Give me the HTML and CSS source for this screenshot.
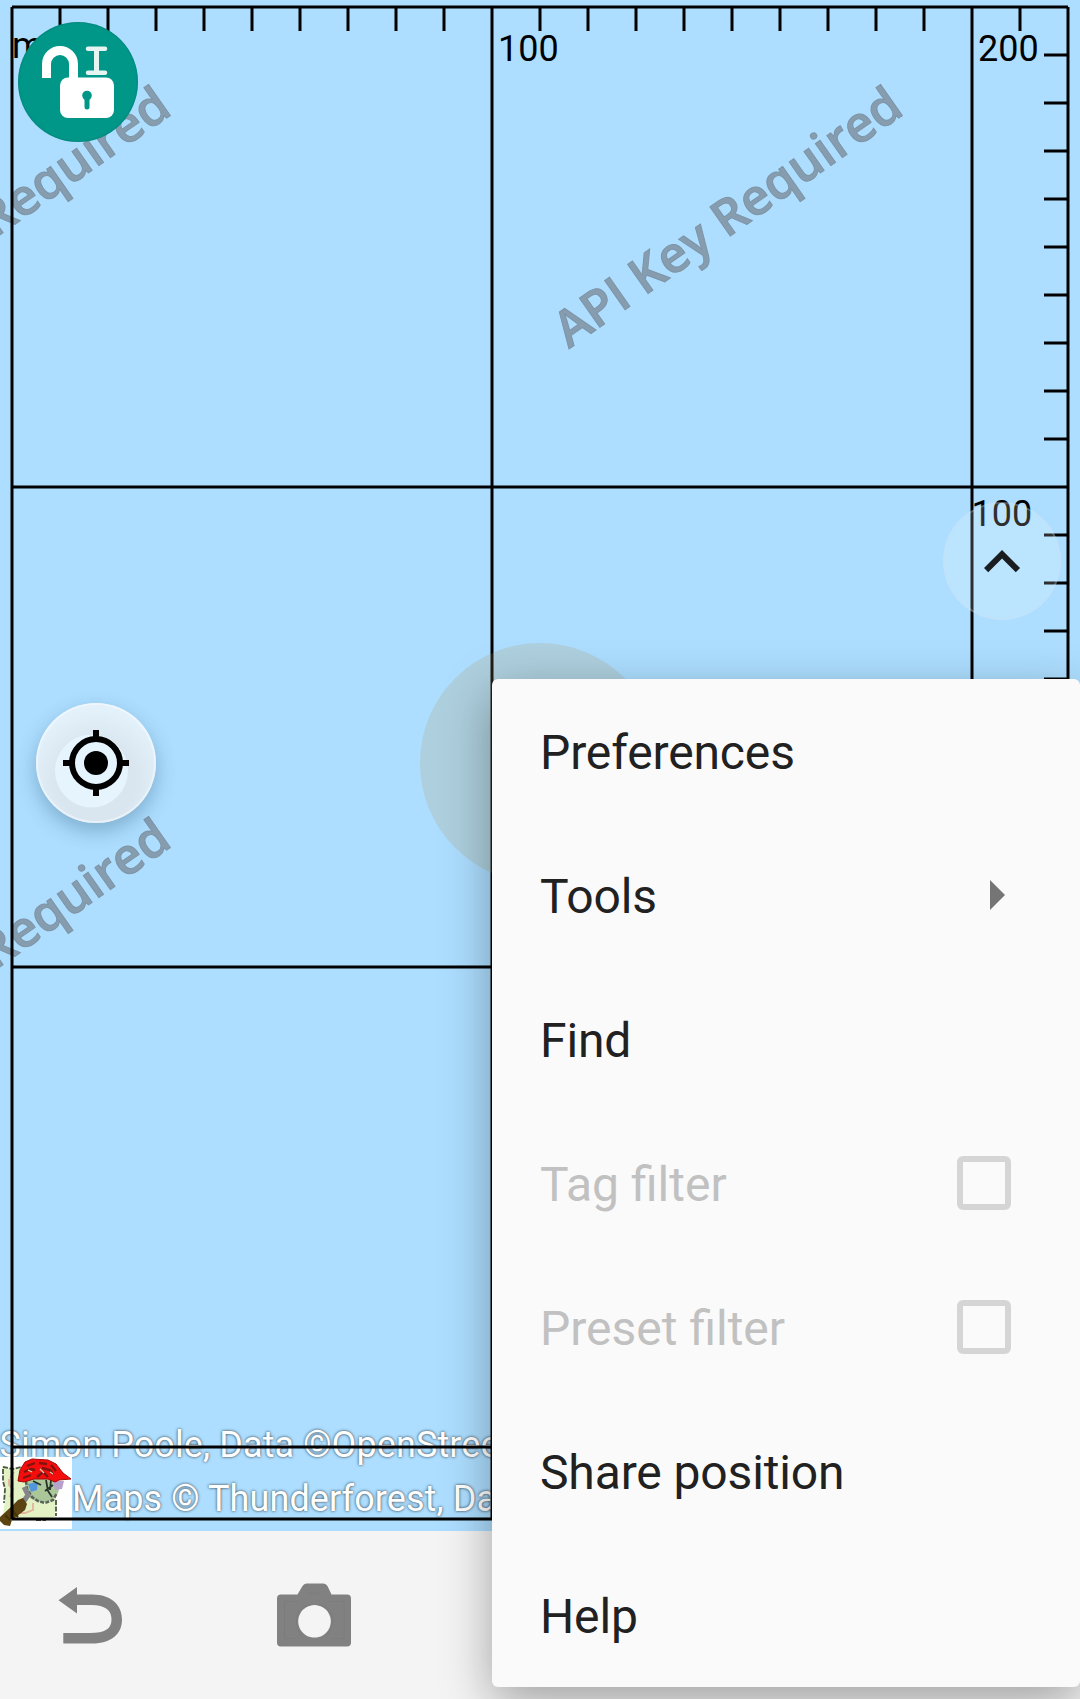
FILE: index.html
```html
<!DOCTYPE html>
<html lang="en">
<head>
<meta charset="utf-8">
<title>Map</title>
<link rel="stylesheet" href="styles.css">
</head>
<body>
<div class="app">
  <main class="map">
    <svg class="map-canvas" viewBox="0 0 1080 1531" width="1080" height="1531">
      <defs>
        <g id="logo">
          <rect width="72" height="72" fill="#fff"/>
          <path d="M2 9l5 2 7 1 6-2h30l5 12 1 20-1 18-13 2-10 1-12-2-10 1-7-4 2-14-1-16z" fill="#e2f2c4"/>
          <path d="M3 10l10 2 8-2M3 12v12l2 8-1 14M56 43v16M36 63h10" fill="none" stroke="#4b5842" stroke-width="1.8" stroke-dasharray="5 1.5"/>
          <path d="M9 22v6l4 4-3 8M33 46v7l-8 3h-5M14 15l-4 6" fill="none" stroke="#e5b39a" stroke-width="1.8"/>
          <ellipse cx="42" cy="31" rx="17" ry="14" fill="#abc79a"/>
          <path d="M53 24h11l-2 8-7 1z" fill="#b6a2cc"/>
          <path d="M28 27l10-2-1 8-6 2z" fill="#5296dc"/>
          <path d="M26 24l1 8 5 8 6 4 7 2 8-3 4-7" fill="none" stroke="#59635a" stroke-width="2.5" stroke-dasharray="4 1.4"/>
          <path d="M46 23l2 11 4 6M51 23l-1 10M33 24l8 4M45 34l8-6" fill="none" stroke="#26352a" stroke-width="1.8"/>
          <path d="M24 30l4 8-4 6" fill="none" stroke="#858489" stroke-width="5"/>
          <path d="M0 60l12-11 6-6 5-2 4 6-2 6-13 10-2 6-6-1-4-4z" fill="#5c4312"/>
          <path d="M11 52l7 8M5 58l5 5" stroke="#463207" stroke-width="2"/>
          <path d="M18 24l2-11 5-8 7-3 16 1 8 4 7 9 8 6-12 1-4 2-7-3H34l-10 3z" fill="#f50d0d" stroke="#a20909" stroke-width="1"/>
          <path d="M27 9l8-3M39 6l8 1M24 15l7-3 4 1M42 11l8 2 3 4M23 21l8-3M37 20l6-5 5 5M51 8l5 6" fill="none" stroke="#7d150e" stroke-width="2.4"/>
          <path d="M28 13l4 2M40 12l4 4M50 15l3 2" stroke="#dccdb1" stroke-width="1.3"/>
        </g>
      </defs>
      <g class="watermark">
        <text transform="translate(569 349) rotate(-35)" textLength="411">API Key Required</text>
        <text transform="translate(-163 349) rotate(-35)" textLength="411">API Key Required</text>
        <text transform="translate(-163 1081) rotate(-35)" textLength="411">API Key Required</text>
      </g>
      <g class="attribution">
        <text x="-0.5" y="1457">Simon Poole, Data ©OpenStreetMap</text>
        <text x="72" y="1511">Maps © Thunderforest, Data</text>
      </g>
      <use href="#logo" x="0" y="1457"/>
      <path class="grid" d="M12 7V1519M492 7V1519M972 7V1519M1068 7V1519M12 7H1068M12 487H1068M12 967H1068M12 1447H1068M12 1519H1068
        M60 7V31M108 7V31M156 7V31M204 7V31M252 7V31M300 7V31M348 7V31M396 7V31M444 7V31M540 7V31M588 7V31M636 7V31M684 7V31M732 7V31M780 7V31M828 7V31M876 7V31M924 7V31M1020 7V31
        M1044 55H1068M1044 103H1068M1044 151H1068M1044 199H1068M1044 247H1068M1044 295H1068M1044 343H1068M1044 391H1068M1044 439H1068M1044 535H1068M1044 583H1068M1044 631H1068M1044 679H1068"/>
      <g class="scale">
        <text x="12" y="58">m</text>
        <text x="498" y="61">100</text>
        <text x="978" y="61">200</text>
        <text x="971.500" y="526">100</text>
      </g>
      <circle class="position" cx="540" cy="763" r="120"/>
    </svg>

    <button class="fab fab-lock" aria-label="Unlock editing">
      <svg viewBox="18 22 120 120" width="120" height="120">
        <path d="M46.5 78V64a13.5 13.5 0 0 1 27 0V82" fill="none" stroke="#fff" stroke-width="9"/>
        <rect x="60" y="77.5" width="54" height="40.500" rx="8" fill="#fff"/>
        <path d="M88 48.800h17M88 72.800h17" stroke="#e6f4f2" stroke-width="4.500" stroke-linecap="round"/>
        <path d="M96.500 49v24" stroke="#e6f4f2" stroke-width="5"/>
        <circle cx="87" cy="95.500" r="4.800" fill="#009688"/>
        <path d="M87 96v11" stroke="#009688" stroke-width="5" stroke-linecap="round"/>
      </svg>
    </button>

    <button class="fab fab-locate" aria-label="Go to current position">
      <svg viewBox="36 703 120 120" width="120" height="120">
        <circle cx="91.500" cy="771" r="36.500" fill="#e6f4fe"/>
        <circle cx="96" cy="763" r="21" fill="#e6f4fe"/>
        <circle cx="96" cy="763" r="24" fill="none" stroke="#000" stroke-width="6"/>
        <circle cx="96" cy="763" r="12"/>
        <path d="M96 730v8M96 788v8M63 763h8M121 763h8" stroke="#000" stroke-width="6"/>
      </svg>
    </button>

    <button class="fab fab-up" aria-label="Show more">
      <svg viewBox="-7.670 -8 39.330 39.330" width="118" height="118">
        <path d="M7.410 15.410L12 10.830l4.590 4.580L18 14l-6-6-6 6z" fill="#1a1d1f"/>
      </svg>
    </button>
  </main>

  <footer class="toolbar">
    <button class="tool" aria-label="Undo">
      <svg viewBox="54 1578 72 72" width="72" height="72" fill="#818181">
        <path d="M58.500 1600.300L77 1587v7.500h15c20 0 30 11 30 25s-10 24-30 24H63.300V1633H90c15 0 21.500-4 21.500-13.500 0-10-6.500-14-20-14.500H77v8.500z"/>
      </svg>
    </button>
    <button class="tool" aria-label="Camera">
      <svg viewBox="278 1577.500 72 72" width="72" height="72" fill="#818181">
        <path fill-rule="evenodd" d="M281 1594h16.500l5-8.500q1.500-2.500 4-2.500h17q2.500 0 4 2.500l4 8.500H347q4 0 4 4v44q0 4-4 4H281q-4 0-4-4v-44q0-4 4-4zM314.500 1604.500a16.300 16.300 0 1 0 .01 0z"/>
        <path d="M306 1592.500h15M297.500 1601h-13v37h11M311 1604.500q-10 1-14 10-3 10 5 21M318 1604.500q10 1 14 10 3 10-5 21M329 1601h15v37h-12" fill="none" stroke="#7c7c7c"/>
      </svg>
    </button>
  </footer>

  <nav class="menu">
    <div class="item"><span class="label">Preferences</span></div>
    <div class="item"><span class="label">Tools</span><span class="submenu-arrow"></span></div>
    <div class="item"><span class="label">Find</span></div>
    <div class="item disabled"><span class="label">Tag filter</span><span class="checkbox"></span></div>
    <div class="item disabled"><span class="label">Preset filter</span><span class="checkbox"></span></div>
    <div class="item"><span class="label">Share position</span></div>
    <div class="item"><span class="label">Help</span></div>
  </nav>
</div>
</body>
</html>
```

FILE: styles.css
```css
* {
  box-sizing: border-box;
}

body {
  margin: 0;
  font-family: Roboto, "Liberation Sans", sans-serif;
}

button {
  margin: 0;
  padding: 0;
  border: 0;
  background: none;
}

.app {
  position: relative;
  display: flex;
  flex-direction: column;
  width: 1080px;
  height: 1699px;
  overflow: hidden;
}

.map {
  position: relative;
  height: 1531px;
  background: #addeff;
}

.map-canvas {
  display: block;
}

.watermark {
  fill: #869db0;
  font: 600 50px "Open Sans", "Noto Sans", sans-serif;
  stroke: #7e94a6;
  stroke-width: 1;
}

.attribution {
  fill: #fff;
  font-size: 36px;
  letter-spacing: 0.1px;
  text-shadow: 0 0 3px rgba(0, 0, 0, 0.8);
}

.grid {
  fill: none;
  stroke: #000;
  stroke-width: 3;
}

.scale {
  font-size: 36px;
}

.position {
  fill: rgba(178, 150, 90, 0.2);
}

/* Round buttons floating over the map */
.fab {
  position: absolute;
  width: 120px;
  height: 120px;
  border-radius: 50%;
}

.fab svg {
  display: block;
}

.fab-lock {
  left: 18px;
  top: 22px;
  background: #009688;
  box-shadow: inset 0 0 2px rgba(0, 60, 50, 0.4);
}

.fab-locate {
  left: 36px;
  top: 703px;
  background: radial-gradient(circle at 50% 65%, #d9e6ef 40%, #e3f1fb 72%);
  box-shadow: inset 0 0 0 2px rgba(255, 255, 255, 0.4), 0 8px 20px rgba(20, 60, 90, 0.3);
}

.fab-up {
  left: 943px;
  top: 502px;
  width: 118px;
  height: 118px;
  background: rgba(255, 255, 255, 0.18);
  box-shadow: inset 0 0 0 2px rgba(210, 225, 235, 0.25);
}

.toolbar {
  display: flex;
  flex: 1;
  align-items: flex-start;
  gap: 152px;
  padding: 47px 54px 0;
  background: #f4f4f4;
}

.tool svg {
  display: block;
  overflow: visible;
}

.menu {
  position: absolute;
  left: 492px;
  top: 679px;
  width: 588px;
  border-radius: 6px;
  background: #fafafa;
  box-shadow: 0 16px 50px rgba(0, 0, 0, 0.34);
}

.item {
  display: flex;
  align-items: center;
  justify-content: space-between;
  height: 144px;
  padding: 0 69px 0 48px;
  color: #212121;
  font-size: 48px;
  letter-spacing: -0.13px;
}

.label {
  padding-top: 2px;
}

.disabled {
  color: #c1c1c1;
  letter-spacing: normal;
}

.submenu-arrow {
  width: 15px;
  height: 30px;
  margin-right: 6px;
  background: #757575;
  clip-path: polygon(0 0, 100% 50%, 0 100%);
}

.checkbox {
  width: 54px;
  height: 54px;
  border: 6px solid #d5d5d5;
  border-radius: 6px;
}
```
